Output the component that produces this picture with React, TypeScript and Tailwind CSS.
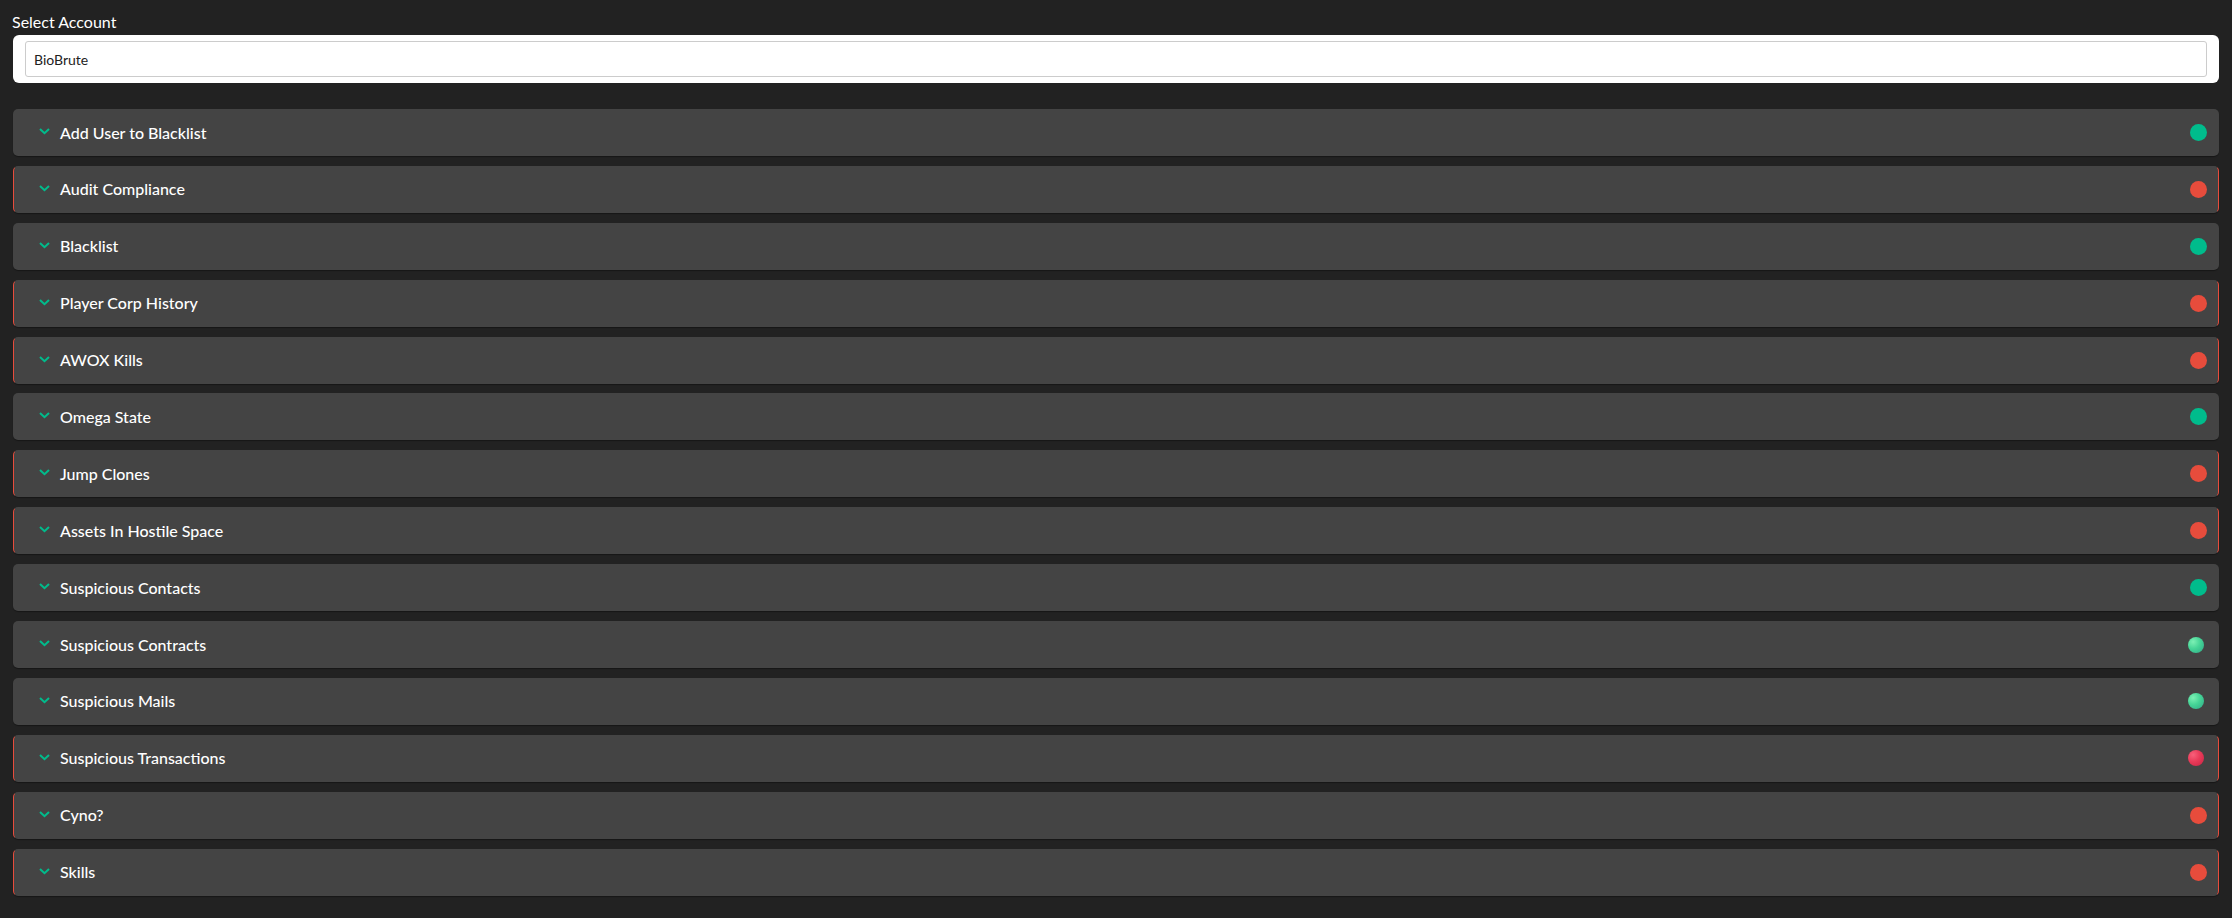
import React from "react";

type Status = "pass" | "fail" | "passGlow" | "failGlow";

interface Check {
  title: string;
  status: Status;
}

const checks: Check[] = [
  { title: "Add User to Blacklist", status: "pass" },
  { title: "Audit Compliance", status: "fail" },
  { title: "Blacklist", status: "pass" },
  { title: "Player Corp History", status: "fail" },
  { title: "AWOX Kills", status: "fail" },
  { title: "Omega State", status: "pass" },
  { title: "Jump Clones", status: "fail" },
  { title: "Assets In Hostile Space", status: "fail" },
  { title: "Suspicious Contacts", status: "pass" },
  { title: "Suspicious Contracts", status: "passGlow" },
  { title: "Suspicious Mails", status: "passGlow" },
  { title: "Suspicious Transactions", status: "failGlow" },
  { title: "Cyno?", status: "fail" },
  { title: "Skills", status: "fail" },
];

function Chevron() {
  return (
    <svg width="11" height="7" viewBox="0 0 11 7" className="shrink-0 -mt-[2px]">
      <polyline points="1,1 5.5,5.2 10,1" fill="none" stroke="#00bc8c" strokeWidth="2" />
    </svg>
  );
}

function StatusDot({ status }: { status: Status }) {
  if (status === "passGlow") {
    return (
      <span className="mr-[3px] h-[16px] w-[16px] rounded-full bg-[radial-gradient(circle_at_32%_30%,#7cf0b4_0%,#45d496_45%,#2fa888_100%)]" />
    );
  }
  if (status === "failGlow") {
    return (
      <span className="mr-[3px] h-[16px] w-[16px] rounded-full bg-[radial-gradient(circle_at_32%_30%,#f8607a_0%,#e83a58_45%,#c82444_100%)]" />
    );
  }
  return (
    <span
      className={
        status === "pass"
          ? "h-[17px] w-[17px] rounded-full bg-[#00bc8c]"
          : "h-[17px] w-[17px] rounded-full bg-[#e74c3c]"
      }
    />
  );
}

function CheckRow({ check }: { check: Check }) {
  const failed = check.status === "fail" || check.status === "failGlow";
  return (
    <div
      className={
        failed
          ? "flex h-[47px] items-center rounded-[5px] border border-transparent border-l-[#e74c3c] border-r-[#e74c3c] bg-[#444] pl-[25px] pr-[11px] shadow-[0_1px_1px_rgba(0,0,0,0.35)]"
          : "flex h-[47px] items-center rounded-[5px] border border-transparent bg-[#444] pl-[25px] pr-[11px] shadow-[0_1px_1px_rgba(0,0,0,0.35)]"
      }
    >
      <Chevron />
      <span className="ml-[10px] flex-1 text-[16px] font-medium text-white">{check.title}</span>
      <StatusDot status={check.status} />
    </div>
  );
}

export default function App() {
  return (
    <div className="min-h-screen bg-[#222] px-[13px] pt-[12px] pb-[20px] font-[Lato,sans-serif]">
      <div className="-ml-[1px] mb-[3px] text-[16px] leading-[20px] text-white">Select Account</div>

      {/* account picker */}
      <div className="rounded-[6px] bg-white px-[12px] py-[6px]">
        <input
          readOnly
          value="BioBrute"
          className="h-[36px] w-full rounded-[3px] border border-[#ccc] bg-white pl-[8px] text-[14px] text-[#222] outline-none"
        />
      </div>

      {/* checks */}
      <div className="mt-[26px] flex flex-col gap-[9.9px]">
        {checks.map((c) => (
          <CheckRow key={c.title} check={c} />
        ))}
      </div>
    </div>
  );
}
